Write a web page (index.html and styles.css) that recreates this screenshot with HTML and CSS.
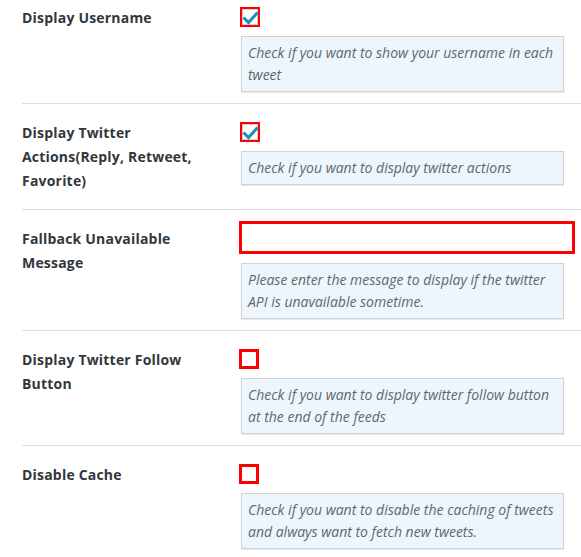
FILE: index.html
```html
<!DOCTYPE html>
<html>
<head>
<meta charset="utf-8">
<link rel="stylesheet" href="styles.css">
</head>
<body>
<div class="settings">
  <div class="row first">
    <div class="label">Display Username</div>
    <div class="field">
      <div class="check-wrap"><span class="checkbox checked"><svg viewBox="0 0 16 16" width="16" height="16"><polyline points="1.5,8.5 6.5,13.5 15.5,3.5" fill="none" stroke="#1e8cbe" stroke-width="3"/></svg></span></div>
      <div class="desc">Check if you want to show your username in each tweet</div>
    </div>
  </div>
  <div class="row">
    <div class="label">Display Twitter Actions(Reply, Retweet, Favorite)</div>
    <div class="field">
      <div class="check-wrap"><span class="checkbox checked"><svg viewBox="0 0 16 16" width="16" height="16"><polyline points="1.5,8.5 6.5,13.5 15.5,3.5" fill="none" stroke="#1e8cbe" stroke-width="3"/></svg></span></div>
      <div class="desc">Check if you want to display twitter actions</div>
    </div>
  </div>
  <div class="row">
    <div class="label">Fallback Unavailable Message</div>
    <div class="field">
      <div class="input-wrap"><input class="text" type="text"></div>
      <div class="desc">Please enter the message to display if the twitter API is unavailable sometime.</div>
    </div>
  </div>
  <div class="row">
    <div class="label">Display Twitter Follow Button</div>
    <div class="field">
      <div class="check-wrap"><span class="checkbox"></span></div>
      <div class="desc">Check if you want to display twitter follow button at the end of the feeds</div>
    </div>
  </div>
  <div class="row">
    <div class="label">Disable Cache</div>
    <div class="field">
      <div class="check-wrap"><span class="checkbox"></span></div>
      <div class="desc">Check if you want to disable the caching of tweets and always want to fetch new tweets.</div>
    </div>
  </div>
</div>
</body>
</html>
```
FILE: styles.css
```css
html, body {
  margin: 0;
  padding: 0;
  background: #ffffff;
}
body {
  font-family: "Open Sans", "Liberation Sans", sans-serif;
  overflow: hidden;
}
.settings {
  margin: -12px 0 0 22px;
}
.row {
  display: grid;
  grid-template-columns: 217px 1fr;
  border-top: 1px solid #dcdcdc;
}
.label {
  font-size: 14px;
  font-weight: 700;
  line-height: 24px;
  letter-spacing: 0.2px;
  color: #32373c;
  padding: 17px 10px 16px 0;
}
.field {
  padding: 11px 0 11px 0;
}
.check-wrap {
  height: 36px;
  display: flex;
  align-items: flex-start;
}
.checkbox {
  box-sizing: border-box;
  width: 20px;
  height: 20px;
  margin-top: 7px;
  border: 3px solid #ff0000;
  background: #fff;
  display: block;
}
.checkbox.checked {
  margin-left: 1px;
  border-width: 2px;
  box-shadow: inset 0 0 0 1px #d0d0d0;
}
.checkbox svg {
  display: block;
  overflow: visible;
}
.input-wrap {
  height: 42px;
}
.text {
  box-sizing: border-box;
  display: block;
  width: 336px;
  height: 33px;
  margin: 0;
  border: 3px solid #ff0000;
  background: #fff;
  outline: none;
  padding: 0;
}
.desc {
  box-sizing: border-box;
  width: 323px;
  margin-left: 2px;
  padding: 5px 6px;
  background: #eef6fd;
  border: 1px solid #d2d2d2;
  box-shadow: 0 1px 1px rgba(0, 0, 0, 0.08);
  font-size: 14px;
  font-style: italic;
  line-height: 22px;
  color: #62666a;
}
```
